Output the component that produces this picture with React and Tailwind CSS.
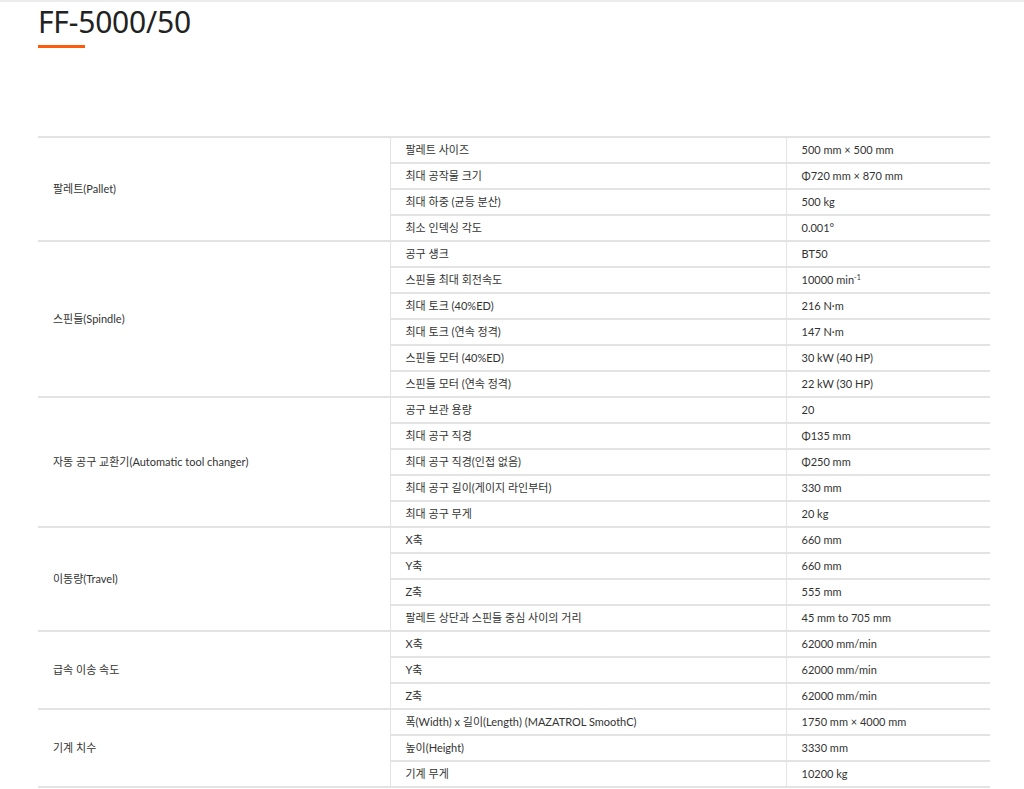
import React from "react";

const groups = [
  {
    name: "팔레트(Pallet)",
    rows: [
      ["팔레트 사이즈", "500 mm × 500 mm"],
      ["최대 공작물 크기", "Φ720 mm × 870 mm"],
      ["최대 하중 (균등 분산)", "500 kg"],
      ["최소 인덱싱 각도", "0.001°"],
    ],
  },
  {
    name: "스핀들(Spindle)",
    rows: [
      ["공구 섕크", "BT50"],
      ["스핀들 최대 회전속도", "MIN"],
      ["최대 토크 (40%ED)", "216 N·m"],
      ["최대 토크 (연속 정격)", "147 N·m"],
      ["스핀들 모터 (40%ED)", "30 kW (40 HP)"],
      ["스핀들 모터 (연속 정격)", "22 kW (30 HP)"],
    ],
  },
  {
    name: "자동 공구 교환기(Automatic tool changer)",
    rows: [
      ["공구 보관 용량", "20"],
      ["최대 공구 직경", "Φ135 mm"],
      ["최대 공구 직경(인접 없음)", "Φ250 mm"],
      ["최대 공구 길이(게이지 라인부터)", "330 mm"],
      ["최대 공구 무게", "20 kg"],
    ],
  },
  {
    name: "이동량(Travel)",
    rows: [
      ["X축", "660 mm"],
      ["Y축", "660 mm"],
      ["Z축", "555 mm"],
      ["팔레트 상단과 스핀들 중심 사이의 거리", "45 mm to 705 mm"],
    ],
  },
  {
    name: "급속 이송 속도",
    rows: [
      ["X축", "62000 mm/min"],
      ["Y축", "62000 mm/min"],
      ["Z축", "62000 mm/min"],
    ],
  },
  {
    name: "기계 치수",
    rows: [
      ["폭(Width) x 길이(Length) (MAZATROL SmoothC)", "1750 mm × 4000 mm"],
      ["높이(Height)", "3330 mm"],
      ["기계 무게", "10200 kg"],
    ],
  },
];

export default function App() {
  return (
    <div
      className="w-[1024px] min-h-[789px] bg-white border-t-2 border-[#ececec] text-[#333]"
      style={{ fontFamily: '"Noto Sans", "Noto Sans CJK KR", sans-serif' }}
    >
      <div className="px-[38px]">
        <h1 className="text-[30px] leading-[40px] pt-[0px] text-[#222] font-normal tracking-[-0.2px]">
          FF-5000/50
        </h1>
        <div className="mt-[3px] w-[47px] h-[3px] bg-[#ff5a0a]" />
        <table
          className="mt-[88px] w-[952px] border-collapse text-[11px] leading-[15px] table-fixed"
          style={{ fontFamily: '"Lato", "Noto Sans CJK KR", sans-serif' }}
        >
          <colgroup>
            <col className="w-[352px]" />
            <col className="w-[396px]" />
            <col className="w-[204px]" />
          </colgroup>
          <tbody>
            {groups.map((g, gi) =>
              g.rows.map((r, ri) => (
                <tr key={gi + "-" + ri} className="h-[26px]">
                  {ri === 0 && (
                    <td
                      rowSpan={g.rows.length}
                      className="border-t-2 border-b-2 border-[#e3e3e3] border-r border-r-[#e3e3e3] pl-[15px] pb-[2px] pt-0 pr-0 align-middle"
                    >
                      {g.name}
                    </td>
                  )}
                  <td
                    className={
                      "border-[#e3e3e3] border-r pl-[15px] pb-[2px] pt-0 pr-0 h-[26px] border-t-2 " +
                      (ri === g.rows.length - 1 ? "border-b-2" : "")
                    }
                  >
                    {r[0]}
                  </td>
                  <td
                    className={
                      "border-[#e3e3e3] pl-[15px] pb-[2px] pt-0 pr-0 h-[26px] border-t-2 " +
                      (ri === g.rows.length - 1 ? "border-b-2" : "")
                    }
                  >
                    {r[1] === "MIN" ? (
                      <span>
                        10000 min<sup className="text-[7px]">-1</sup>
                      </span>
                    ) : (
                      r[1]
                    )}
                  </td>
                </tr>
              ))
            )}
          </tbody>
        </table>
      </div>
    </div>
  );
}
